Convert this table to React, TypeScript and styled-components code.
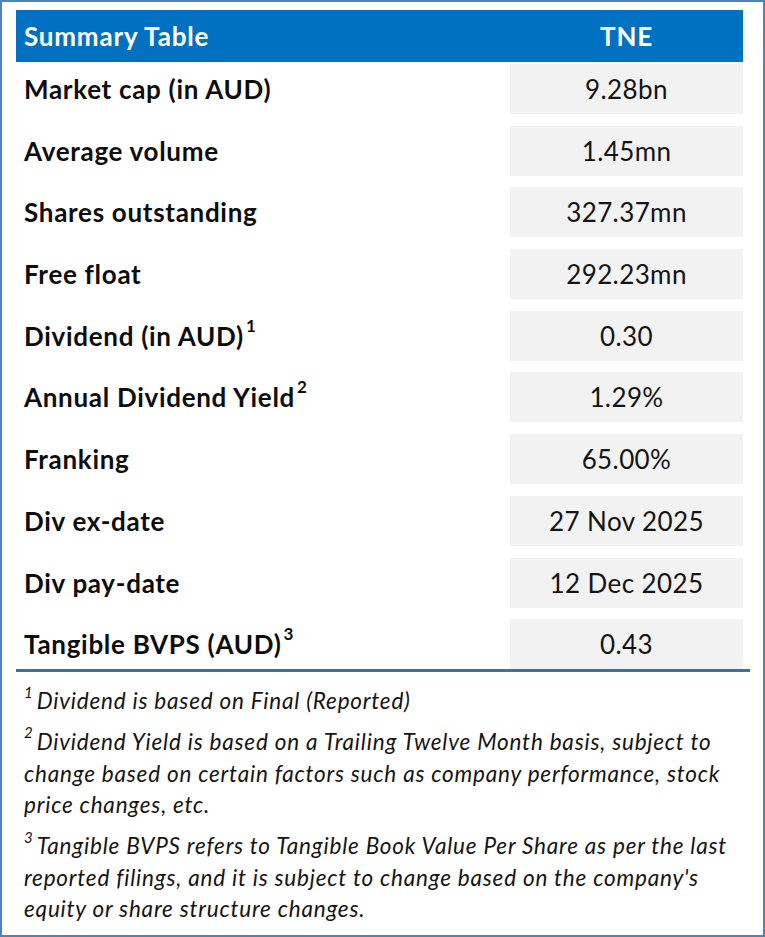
import { FC, ReactNode } from "react";
import styled, { createGlobalStyle } from "styled-components";

const GlobalStyle = createGlobalStyle`
  html, body {
    margin: 0;
    padding: 0;
    background: #ffffff;
  }
  body {
    font-family: Lato, "Open Sans", "Liberation Sans", sans-serif;
    color: #111111;
  }
`;

const Frame = styled.div`
  width: 765px;
  height: 937px;
  box-sizing: border-box;
  border: 2px solid #4f81bd;
  padding: 8px 0 0 14px;
  background: #ffffff;
`;

const Table = styled.div`
  width: 727px;
  display: flex;
  flex-direction: column;
`;

const HeaderRow = styled.div`
  display: grid;
  grid-template-columns: 1fr 233px;
  height: 52px;
  align-items: center;
  background: #0070c0;
  color: #ffffff;
  font-weight: 700;
  font-size: 26px;
  letter-spacing: 0.8px;
  margin-bottom: 2px;
`;

const HeaderCell = styled.div<{ $center?: boolean }>`
  padding-left: ${(p) => (p.$center ? "0" : "8px")};
  text-align: ${(p) => (p.$center ? "center" : "left")};
`;

const Rows = styled.div`
  display: flex;
  flex-direction: column;
  gap: 11.7px;
`;

const Row = styled.div`
  display: grid;
  grid-template-columns: 1fr 233px;
  height: 50px;
  font-size: 26px;
`;

const Label = styled.div`
  display: flex;
  align-items: center;
  padding-left: 8px;
  font-weight: 700;
  letter-spacing: 0.7px;
  color: #0d0d0d;

  sup {
    font-size: 17px;
    line-height: 0;
    position: relative;
    top: -10px;
    margin-left: 2px;
    letter-spacing: 0;
  }
`;

const Value = styled.div`
  display: flex;
  align-items: center;
  justify-content: center;
  background: #f2f2f2;
  color: #141414;
  letter-spacing: 0.4px;
`;

const Rule = styled.div`
  width: 734px;
  height: 3px;
  background: #2e75b6;
`;

const Notes = styled.div`
  padding: 13px 0 0 8px;
  display: flex;
  flex-direction: column;
  gap: 9px;
`;

const Note = styled.p`
  margin: 0;
  font-style: italic;
  font-size: 22.5px;
  letter-spacing: 0.8px;
  line-height: 31.7px;
  color: #141414;

  sup {
    font-size: 15px;
    line-height: 0;
    position: relative;
    top: -3px;
    margin-right: 4px;
    letter-spacing: 0;
  }
`;

type Item = { label: ReactNode; value: string };

const items: Item[] = [
  { label: "Market cap (in AUD)", value: "9.28bn" },
  { label: "Average volume", value: "1.45mn" },
  { label: "Shares outstanding", value: "327.37mn" },
  { label: "Free float", value: "292.23mn" },
  { label: <>Dividend (in AUD)<sup>1</sup></>, value: "0.30" },
  { label: <>Annual Dividend Yield<sup>2</sup></>, value: "1.29%" },
  { label: "Franking", value: "65.00%" },
  { label: "Div ex-date", value: "27 Nov 2025" },
  { label: "Div pay-date", value: "12 Dec 2025" },
  { label: <>Tangible BVPS (AUD)<sup>3</sup></>, value: "0.43" },
];

const App: FC = () => {
  return (
    <Frame>
      <GlobalStyle />
      <Table>
        <HeaderRow>
          <HeaderCell>Summary Table</HeaderCell>
          <HeaderCell $center>TNE</HeaderCell>
        </HeaderRow>
        <Rows>
          {items.map((item, i) => (
            <Row key={i}>
              <Label>{item.label}</Label>
              <Value>{item.value}</Value>
            </Row>
          ))}
        </Rows>
      </Table>
      <Rule />
      <Notes>
        <Note>
          <sup>1</sup>Dividend is based on Final (Reported)
        </Note>
        <Note>
          <sup>2</sup>Dividend Yield is based on a Trailing Twelve Month basis, subject to
          <br />
          change based on certain factors such as company performance, stock
          <br />
          price changes, etc.
        </Note>
        <Note>
          <sup>3</sup>Tangible BVPS refers to Tangible Book Value Per Share as per the last
          <br />
          reported filings, and it is subject to change based on the company's
          <br />
          equity or share structure changes.
        </Note>
      </Notes>
    </Frame>
  );
};

export default App;
